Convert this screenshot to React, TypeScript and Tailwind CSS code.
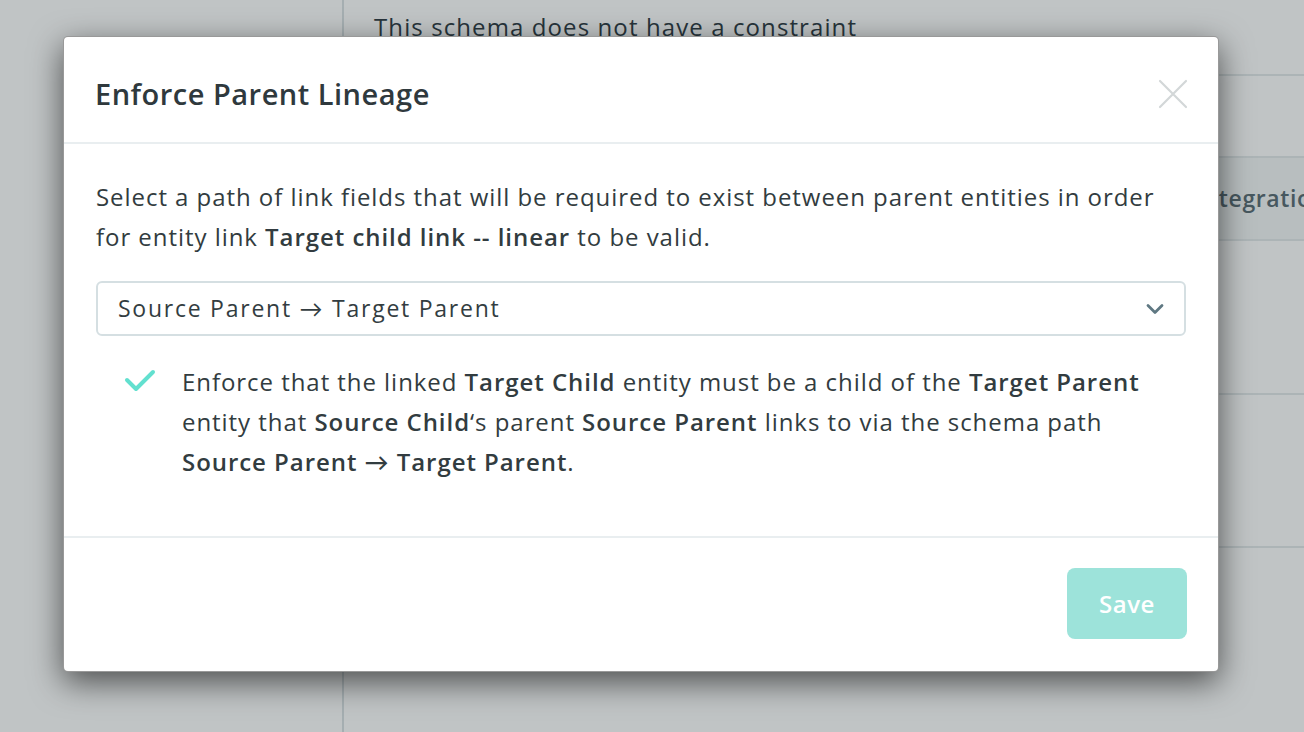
import React from "react";

const font = { fontFamily: "'Open Sans', Lato, sans-serif" };

function CloseIcon() {
  return (
    <svg width="30" height="30" viewBox="0 0 30 30" fill="none">
      <path d="M2 2 L28 28 M28 2 L2 28" stroke="#d3d7d8" strokeWidth="2.2" strokeLinecap="round" />
    </svg>
  );
}

function Chevron() {
  return (
    <svg width="18" height="12" viewBox="0 0 18 12" fill="none">
      <path d="M2 2.5 L9 9.5 L16 2.5" stroke="#5f7882" strokeWidth="2.8" strokeLinecap="round" strokeLinejoin="round" />
    </svg>
  );
}

function Check() {
  return (
    <svg width="32" height="26" viewBox="0 0 32 26" fill="none">
      <path d="M3 11 L12 20 L29 3" stroke="#62e0cf" strokeWidth="4" strokeLinecap="round" strokeLinejoin="round" />
    </svg>
  );
}

export default function App() {
  return (
    <div className="relative w-[1304px] h-[732px] overflow-hidden bg-white text-[#313c40]" style={font}>
      {/* Underlying page */}
      <div className="flex h-full">
        <div className="w-[344px] shrink-0 border-r-2 border-[#d9e0e2]" />
        <div className="flex-1 flex flex-col min-w-0">
          <div className="h-[76px] border-b-2 border-[#e2e8ea] pl-[30px] pt-[9px] text-[24px] tracking-[1.1px] leading-[36px] text-[#25323a] whitespace-nowrap">
            This schema does not have a constraint
          </div>
          <div className="h-[82px] border-b-2 border-[#e2e8ea]" />
          <div className="h-[83px] border-b-2 border-[#e2e8ea] bg-[#f4f6f7] flex items-center pl-[852px] text-[23px] tracking-[0.6px] font-semibold text-[#52656d] whitespace-nowrap overflow-hidden">
            Integrations
          </div>
          <div className="h-[154px] border-b-2 border-[#e2e8ea]" />
          <div className="h-[153px] border-b-2 border-[#e2e8ea]" />
          <div className="flex-1" />
        </div>
      </div>

      {/* Backdrop */}
      <div className="absolute inset-0 bg-[rgba(45,58,63,0.3)]">
        <div className="ml-[63px] mt-[36px] w-[1156px] h-[636px] bg-white rounded-[5px] border border-black/40 shadow-[0_10px_32px_rgba(0,0,0,0.6)] flex flex-col">
          {/* Header */}
          <div className="h-[107px] shrink-0 border-b-2 border-[#e9eef0] flex items-center justify-between pl-[31px] pr-[30px] pt-[8px]">
            <h2 className="text-[29px] font-semibold text-[#2f393d] tracking-[0.5px]">Enforce Parent Lineage</h2>
            <CloseIcon />
          </div>

          {/* Body */}
          <div className="flex-1 px-[32px] pt-[33px]">
            <p className="text-[24px] tracking-[0.95px] leading-[40px] text-[#323c40] whitespace-nowrap">
              Select a path of link fields that will be required to exist between parent entities in order
              <br />
              for entity link <span className="font-semibold">Target child link -- linear</span> to be valid.
            </p>
            <div className="mt-[24px] h-[55px] border-2 border-[#d5dfe2] rounded-[6px] flex items-center justify-between pl-[20px] pr-[20px]">
              <span className="text-[23px] tracking-[1.75px] text-[#333d41]">Source Parent → Target Parent</span>
              <Chevron />
            </div>
            <div className="mt-[26px] flex pl-[28px]">
              <div className="w-[58px] shrink-0 pt-[7px]">
                <Check />
              </div>
              <p className="text-[24px] tracking-[0.95px] leading-[40px] text-[#323c40] whitespace-nowrap">
                Enforce that the linked <span className="font-semibold">Target Child</span> entity must be a child of the{" "}
                <span className="font-semibold">Target Parent</span>
                <br />
                entity that <span className="font-semibold">Source Child</span>‘s parent{" "}
                <span className="font-semibold">Source Parent</span> links to via the schema path
                <br />
                <span className="font-semibold">Source Parent → Target Parent</span>.
              </p>
            </div>
          </div>

          {/* Footer */}
          <div className="h-[135px] shrink-0 border-t-2 border-[#e9eef0] flex items-start justify-end pr-[31px] pt-[30px]">
            <button className="w-[120px] h-[71px] rounded-[8px] bg-[#9de3da] text-white text-[24px] tracking-[0.5px] font-semibold">
              Save
            </button>
          </div>
        </div>
      </div>
    </div>
  );
}
